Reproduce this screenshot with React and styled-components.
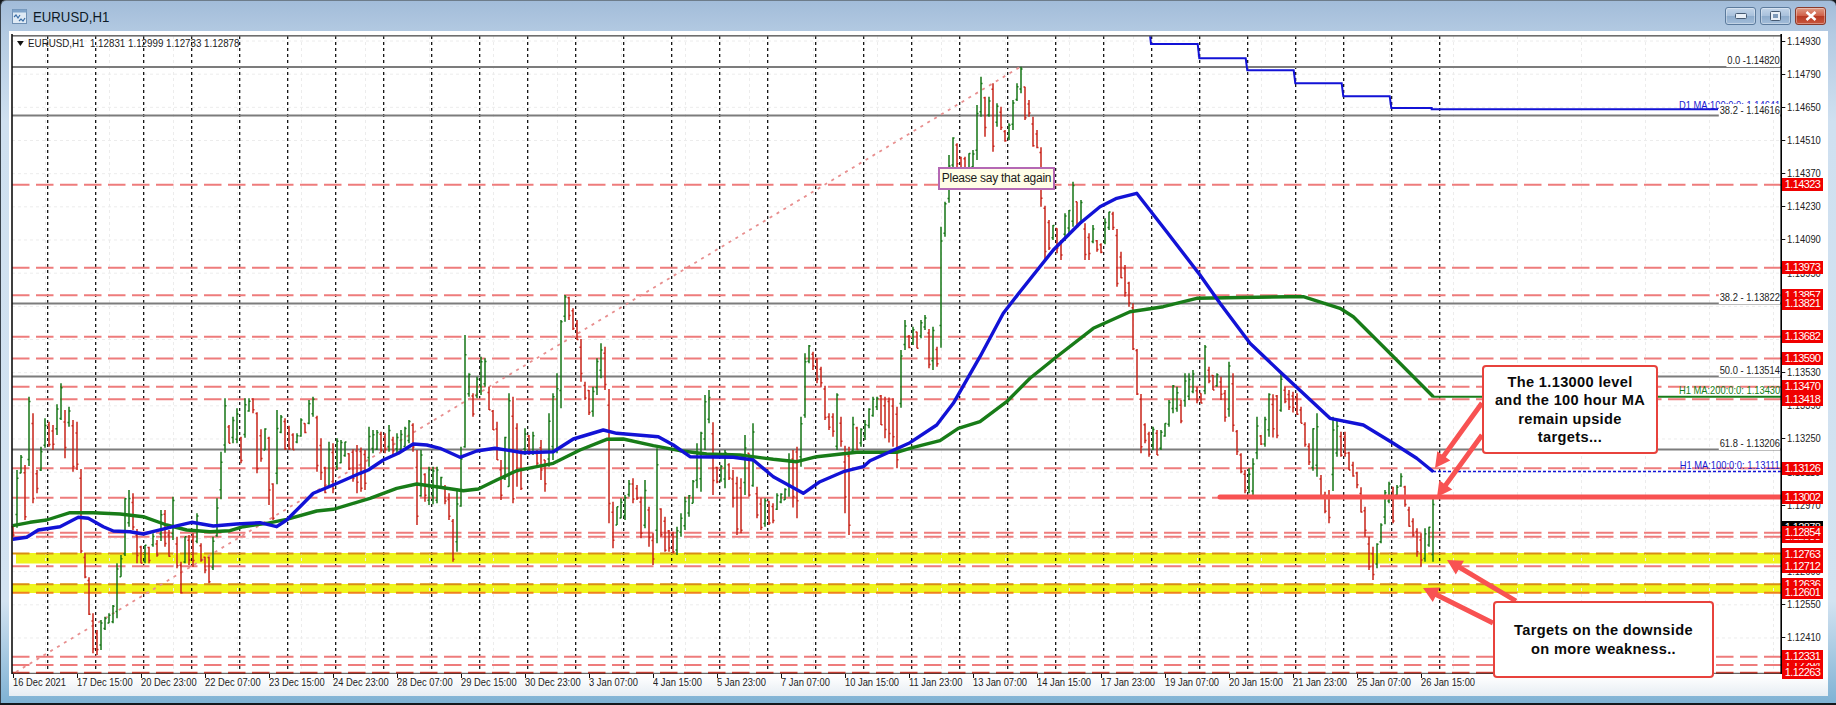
import React from 'react'
import styled, { createGlobalStyle, css } from 'styled-components'

const priceY = p => 41 + (1.1493 - p) * 23690

// traced from the chart: [x, top, bottom], in 3x crop coordinates
const fromCrop = (ox, oy, list) => list.map(([x, a, b]) => [ox + x / 3, oy + a / 3, oy + b / 3])
const pts = (ox, oy, list) => list.map(([x, y]) => [ox + x / 3, oy + y / 3])

const rawBars = [
  ...fromCrop(10, 330, [[13,590,620],[25,420,570],[35,375,430],[45,405,570],[55,200,340],[63,80,345],[70,250,520],[80,420,490],[90,350,380],[100,250,375],[110,265,340],[125,260,310],[133,285,360],[150,255,310],[157,160,270],[170,240,385],[180,230,290],[190,270,425],[200,275,420],[210,395,500],[215,460,670],[222,670,745],[232,700,820],[240,790,855],[248,850,970],[258,900,975],[268,870,960],[280,860,900],[295,850,880],[310,825,880],[322,700,865],[335,675,740],[347,505,640],[355,480,590],[365,490,600],[375,600,650],[385,650,700],[400,645,700],[415,650,700],[430,610,650],[445,630,680],[455,540,600],[462,490,620],[470,540,650],[480,600,680],[490,500,630],[500,620,715],[510,695,790],[520,695,760],[530,620,700],[545,610,710],[560,550,640],[570,640,695],[585,680,730],[597,680,760],[607,620,720],[617,505,620],[627,430,560],[637,365,490],[650,205,340],[660,285,340],[675,235,340],[690,320,400],[700,210,260],[710,205,240],[730,205,250],[745,300,430],[760,295,360],[775,320,525],[785,460,570],[795,310,465],[805,240,380],[815,255,310],[830,265,360],[845,310,360],[860,310,340],[870,265,320],[885,280,310],[897,210,255],[905,200,260],[915,280,425],[930,325,450],[945,410,490],[955,335,470],[970,340,490],[985,325,420],[1000,340,410],[1010,335,380],[1020,370,420],[1035,265,440],[1045,345,490],[1060,360,480],[1075,290,410],[1090,300,370],[1105,300,360],[1120,310,370],[1135,285,365],[1150,320,375],[1165,310,370],[1180,290,350],[1195,270,340],[1210,280,365],[1222,360,585],[1232,360,500],[1245,430,515],[1260,410,525],[1275,410,520]]),
  ...fromCrop(440, 280, [[5,590,625],[25,640,720],[40,740,845],[50,630,815],[60,620,715],[68,500,680],[75,165,400],[85,280,350],[95,340,410],[105,345,400],[115,290,355],[125,230,345],[135,235,320],[145,320,390],[155,390,450],[165,425,540],[178,535,660],[188,540,660],[198,470,600],[205,340,620],[215,350,670],[228,430,620],[240,510,630],[250,445,525],[265,465,525],[280,455,525],[290,510,560],[305,480,600],[320,540,635],[330,400,560],[345,400,575],[355,280,520],[365,120,385],[372,90,240],[380,45,125],[390,50,120],[405,70,215],[415,120,180],[428,240,305],[435,305,360],[445,330,405],[455,320,410],[465,315,410],[475,235,345],[485,190,295],[495,200,330],[502,290,660],[510,590,730],[520,665,805],[530,680,735],[540,655,715],[552,645,720],[565,600,650],[575,595,670],[590,615,660],[605,650,775],[615,600,745],[625,680,800],[635,760,855],[645,740,820],[655,505,790],[665,685,770],[675,710,815],[690,750,815],[700,755,820],[712,740,825],[720,700,770],[730,685,740],[740,650,750],[750,645,710],[762,600,670],[772,490,625],[785,455,635],[795,345,510],[805,330,430],[815,345,520],[822,510,645],[835,560,610],[848,555,605],[860,510,625],[870,550,600],[885,590,680],[895,590,765],[905,595,760],[912,465,645],[922,520,650],[935,430,620],[945,620,715],[960,655,750],[970,680,755],[980,655,740],[995,670,730],[1010,640,690],[1025,640,670],[1040,625,660],[1052,520,650],[1065,620,690],[1075,500,715],[1082,410,560],[1090,250,410],[1100,220,270],[1110,195,250],[1120,215,270],[1130,235,310],[1145,260,320],[1150,290,370],[1160,375,420],[1170,400,450],[1180,400,470],[1190,340,510],[1200,410,500],[1212,460,590],[1220,520,700],[1225,500,765],[1240,410,520],[1252,440,510],[1265,445,500],[1280,420,480],[1295,350,410],[1305,350,390],[1318,350,435]]),
  ...fromCrop(870, 250, [[28,435,525],[40,380,540],[50,440,565],[65,445,590],[77,470,655],[88,260,460],[97,300,380],[107,210,300],[120,255,295],[130,230,285],[142,245,295],[155,210,265],[167,195,240],[178,260,355],[190,230,360],[200,290,350],[210,280,330]]),
  ...fromCrop(900, 60, [[125,500,620],[135,425,530],[147,285,410],[160,232,330],[172,250,330],[183,290,330],[195,290,330],[205,280,330],[217,270,330],[228,300,330],[232,135,300],[240,50,170],[250,55,190],[258,110,230],[265,110,170],[274,25,150],[280,70,275],[292,130,200],[303,140,210],[313,210,245],[325,190,240],[333,185,240],[342,120,210],[352,70,105],[363,20,100],[370,35,120],[378,80,180],[388,120,170],[397,170,260],[407,210,265],[417,250,320],[425,305,440],[433,390,580],[440,510,600],[450,480,570],[462,495,540],[470,505,580],[480,540,600],[490,480,570],[500,460,530],[510,450,520],[522,365,500],[532,425,500],[542,420,490],[552,490,600],[562,500,600],[570,520,600],[580,495,550],[592,540,575],[602,550,580],[612,535,580]]),
  ...fromCrop(1100, 160, [[20,175,250],[30,155,210],[38,155,210],[45,290,415],[52,320,380],[60,275,355],[70,265,380],[78,315,410],[90,365,440],[100,430,570],[107,540,620],[113,620,705],[118,705,830],[128,765,880],[138,790,850],[143,790,915],[152,815,890],[163,800,870],[172,810,885],[183,810,870],[192,790,830],[203,765,825],[212,720,800],[222,675,760],[232,680,755],[240,720,790],[250,640,740],[262,615,690],[272,640,720],[283,630,700],[293,680,730],[303,700,730],[315,555,660],[325,620,670],[340,645,690],[350,640,680],[358,530,650],[368,650,720],[378,690,785],[388,605,770],[400,640,815],[415,810,885],[425,880,940],[435,930,1000],[445,925,1000],[458,895,1005],[468,770,880],[480,825,855],[495,770,860],[507,700,830],[525,705,835],[537,590,700],[548,640,755],[560,680,730],[572,690,750],[585,700,765],[600,740,790],[620,800,860],[632,850,915],[645,760,950],[660,820,950],[668,945,1010],[678,995,1060],[685,990,1090],[693,840,990],[703,770,850],[712,780,890],[722,815,890],[735,815,890],[750,875,930],[762,905,950],[775,935,985],[790,910,1020],[800,1040,1130],[810,1130,1230],[820,1160,1260],[828,1155,1280],[835,1150,1225],[845,1090,1150],[855,990,1070],[865,965,1030],[875,980,1090],[885,975,1010],[898,940,980],[910,960,1000],[920,985,1040],[930,1040,1100],[940,1075,1130],[950,1105,1190],[960,1115,1195],[965,1120,1220],[970,1040,1130],[978,1105,1205],[988,1100,1160],[995,1055,1140],[1000,1010,1205]]),
]

const rand = i => {
  const s = Math.sin(i * 12.9898) * 43758.5453
  return s - Math.floor(s)
}

const buildBars = () => {
  const slots = new Map()
  rawBars.forEach(([x, top, bottom]) => slots.set(Math.round((x - 1) / 4), { top, bottom }))
  const keys = [...slots.keys()].sort((a, b) => a - b)
  const out = []
  keys.forEach((k, n) => {
    const cur = slots.get(k)
    out.push({ slot: k, ...cur })
    const next = keys[n + 1]
    if (next === undefined) return
    const nb = slots.get(next)
    for (let s = k + 1; s < next; s++) {
      const t = (s - k) / (next - k)
      out.push({ slot: s, top: cur.top + (nb.top - cur.top) * t, bottom: cur.bottom + (nb.bottom - cur.bottom) * t })
    }
  })
  // price bars always touch their neighbour, close the gaps left by tracing
  out.forEach((b, i) => {
    if (!i) return
    const prev = out[i - 1]
    if (b.top > prev.bottom) b.top = prev.bottom - 1
    if (b.bottom < prev.top) b.bottom = prev.top + 1
  })
  return out
}

const bars = buildBars()
let upPath = ''
let downPath = ''
bars.forEach((b, i) => {
  const x = b.slot * 4 + 1
  const mid = (b.top + b.bottom) / 2
  const prev = i ? (bars[i - 1].top + bars[i - 1].bottom) / 2 : mid
  const up = mid < prev
  const h = b.bottom - b.top
  const open = up ? b.bottom - h * 0.25 * rand(i) : b.top + h * 0.25 * rand(i)
  const close = up ? b.top + h * 0.25 * rand(i + 500) : b.bottom - h * 0.25 * rand(i + 500)
  const d = `M${x} ${b.top.toFixed(1)}V${b.bottom.toFixed(1)}M${x - 1.5} ${open.toFixed(1)}H${x}M${x} ${close.toFixed(1)}H${x + 1.5}`
  if (up) upPath += d
  else downPath += d
})

const blueLine = [
  ...pts(10, 330, [[8,628],[50,622],[85,600],[150,590],[205,562],[235,565],[280,590],[310,603],[360,605],[400,612],[440,602],[490,590],[545,577],[610,588],[680,582],[750,578],[800,590],[830,570],[870,530],[910,490],[975,463],[1050,430],[1075,420],[1120,390],[1165,370],[1210,342],[1250,345]]),
  ...pts(440, 280, [[0,505],[60,532],[110,513],[165,505],[250,518],[340,515],[400,477],[490,450],[530,460],[655,470],[700,495],[750,530],[880,532],[940,540],[1000,590],[1090,640],[1140,605],[1210,575],[1270,560]]),
  ...pts(870, 250, [[0,632],[120,578],[200,525],[250,460],[330,320],[400,190],[450,125],[550,0]]),
  ...pts(900, 60, [[540,490],[600,440],[650,415]]),
  ...pts(1100, 160, [[110,100],[200,215],[300,345],[360,430],[450,550],[540,635],[690,775],[790,795],[880,850],[950,895],[1000,935]]),
]

const greenLine = [
  ...pts(10, 330, [[8,587],[60,577],[110,570],[180,548],[250,548],[330,552],[400,560],[470,585],[530,600],[600,605],[660,602],[700,590],[770,580],[830,568],[920,543],[970,538],[1080,505],[1160,475],[1220,462]]),
  ...pts(440, 280, [[0,622],[70,632],[115,627],[170,600],[230,572],[340,550],[420,510],[500,478],[550,477],[640,497],[720,512],[800,522],[900,525],[1000,538],[1070,545],[1130,530],[1250,517]]),
  ...pts(870, 250, [[80,607],[130,592],[210,572],[265,535],[330,515],[410,455],[480,385],[560,320],[670,235],[780,185],[880,170],[980,145]]),
  ...pts(1100, 160, [[570,410],[610,410],[720,445],[760,470],[890,600],[1000,710]]),
]

const stepLine = pts(1130, 20, [[60,45],[63,72],[203,72],[208,115],[347,115],[352,151],[491,151],[496,190],[635,190],[640,229],[779,229],[784,264],[905,264],[905,268],[1764,268]])

const toPoints = list => list.map(([x, y]) => `${x.toFixed(1)},${y.toFixed(1)}`).join(' ')

const levels = [
  { y: priceY(1.14323) },
  { y: priceY(1.13973) },
  { y: priceY(1.13857) },
  { y: priceY(1.13682) },
  { y: priceY(1.1359) },
  { y: priceY(1.1347) },
  { y: priceY(1.13418) },
  { y: priceY(1.13126) },
  { y: priceY(1.13002) },
  { y: 532.7 },
  { y: 536.7 },
  { y: 553.5, color: '#d98f12' },
  { y: 566.2 },
  { y: 584.2, color: '#d98f12' },
  { y: 592.8, color: '#f0821e' },
  { y: 656.8 },
  { y: 665 },
  { y: 672.8, color: '#e84a3c' },
]

const fibLevels = [1.1482, 1.14616, 1.13822, 1.13514, 1.13206]

const axisTicks = Array.from({ length: 19 }, (_, i) => 1.1493 - i * 0.0014)

const priceTags = [
  [1.14323], [1.13973], [1.13857], [1.13821], [1.13682], [1.1359], [1.1347], [1.13418], [1.13126], [1.13002],
  [1.12878, '#000'], [1.12838], [1.12854], [1.12763], [1.12712], [1.12636], [1.12601], [1.12294], [1.12331], [1.12263],
]

const timeLabels = ['16 Dec 2021', '17 Dec 15:00', '20 Dec 23:00', '22 Dec 07:00', '23 Dec 15:00', '24 Dec 23:00', '28 Dec 07:00', '29 Dec 15:00', '30 Dec 23:00', '3 Jan 07:00', '4 Jan 15:00', '5 Jan 23:00', '7 Jan 07:00', '10 Jan 15:00', '11 Jan 23:00', '13 Jan 07:00', '14 Jan 15:00', '17 Jan 23:00', '19 Jan 07:00', '20 Jan 15:00', '21 Jan 23:00', '25 Jan 07:00', '26 Jan 15:00']

const arrows = [
  [1482, 403, 1435, 468],
  [1482, 435, 1437, 497],
  [1516, 601, 1447, 560],
  [1493, 623, 1423, 588],
]

const arrowPolygon = ([x1, y1, x2, y2]) => {
  const len = Math.hypot(x2 - x1, y2 - y1)
  const ux = (x2 - x1) / len
  const uy = (y2 - y1) / len
  const nx = -uy
  const ny = ux
  const bx = x2 - ux * 15
  const by = y2 - uy * 15
  const p = (x, y) => `${x.toFixed(1)},${y.toFixed(1)}`
  return [
    p(x1 + nx * 2.5, y1 + ny * 2.5),
    p(bx + nx * 2.5, by + ny * 2.5),
    p(bx + nx * 8, by + ny * 8),
    p(x2, y2),
    p(bx - nx * 8, by - ny * 8),
    p(bx - nx * 2.5, by - ny * 2.5),
    p(x1 - nx * 2.5, y1 - ny * 2.5),
  ].join(' ')
}

const Global = createGlobalStyle`
  html, body { margin: 0; padding: 0; background: #14181c; overflow: hidden; }
  #root { width: 1836px; height: 705px; }
`

const Window = styled.div`
  box-sizing: border-box;
  width: 1836px;
  height: 703px;
  display: flex;
  flex-direction: column;
  padding: 0 8px 7px 8px;
  border-radius: 6px 6px 0 0;
  border-left: 1px solid #39424c;
  border-top: 1px solid #6d7c8a;
  background: linear-gradient(180deg, #a2bcd9 0, #b3cae2 32px, #cfe0f0 120px, #d3e3f1 600px, #7fb2d4 100%);
  font-family: "Liberation Sans", Arial, sans-serif;
`

const TitleBar = styled.div`
  height: 30px;
  flex: none;
  display: flex;
  align-items: center;
  gap: 6px;
  padding-left: 3px;
  padding-right: 2px;
`

const Title = styled.div`
  flex: 1;
  font-size: 15px;
  color: #0d1a26;
  transform: scaleX(0.88);
  transform-origin: left center;
`

const WinButtons = styled.div`
  display: flex;
  gap: 4px;
`

const WinButton = styled.div`
  width: 31px;
  height: 18px;
  box-sizing: border-box;
  border: 1px solid ${p => (p.$close ? '#8a3a2a' : '#5b7a9c')};
  border-radius: 3px;
  display: flex;
  align-items: center;
  justify-content: center;
  box-shadow: inset 0 0 0 1px rgba(255, 255, 255, 0.35);
  background: ${p => (p.$close
    ? 'linear-gradient(180deg, #df9b85 0, #d0624a 48%, #b83a24 52%, #c8563c 100%)'
    : 'linear-gradient(180deg, #c3d5e9 0, #a9c1dc 48%, #8eaccc 52%, #a3bdd9 100%)')};
`

const Sheet = styled.div`
  flex: 1;
  display: flex;
  flex-direction: column;
  background: linear-gradient(180deg, #fff 0, #fff 97%, #e6edf3 100%);
  padding: 3px 0 0 2px;
  min-height: 0;
`

const ChartRow = styled.div`
  display: flex;
  height: 640px;
  flex: none;
`

const Plot = styled.div`
  position: relative;
  width: 1771px;
  height: 640px;
  flex: none;
`

const ChartSvg = styled.svg`
  display: block;
  width: 1771px;
  height: 640px;
`

const squeezed = css`
  font-size: 11px;
  white-space: nowrap;
  transform: scaleX(0.85);
`

const Legend = styled.div`
  position: absolute;
  left: 6px;
  top: 2px;
  display: flex;
  align-items: center;
  gap: 5px;
  height: 14px;
  color: #1c1c1c;
  ${squeezed}
  font-size: 11.5px;
  transform-origin: left center;
`

const Caret = styled.span`
  width: 0;
  height: 0;
  border-left: 4px solid transparent;
  border-right: 4px solid transparent;
  border-top: 5px solid #111;
`

const ChartNote = styled.div`
  position: absolute;
  right: 2px;
  height: 13px;
  line-height: 13px;
  padding-left: 1px;
  color: ${p => p.$color};
  background: ${p => (p.$solid ? '#fff' : 'transparent')};
  ${squeezed}
  transform-origin: right center;
`

const Tooltip = styled.div`
  position: absolute;
  left: 927px;
  top: 133px;
  box-sizing: border-box;
  width: 117px;
  height: 23px;
  border: 2px solid #b468b4;
  background: #fffde6;
  color: #1a1a1a;
  font-size: 12px;
  letter-spacing: -0.25px;
  line-height: 19px;
  text-align: center;
  white-space: nowrap;
  overflow: hidden;
`

const Callout = styled.div`
  position: absolute;
  left: ${p => p.$left}px;
  top: ${p => p.$top}px;
  width: ${p => p.$width}px;
  height: ${p => p.$height}px;
  box-sizing: border-box;
  border: 2px solid #e8423c;
  border-radius: 4px;
  background: #fff;
  display: flex;
  flex-direction: column;
  align-items: center;
  justify-content: center;
  color: #0a0a0a;
  font-weight: 700;
  font-size: 14.6px;
  line-height: 18.2px;
  letter-spacing: 0.35px;
`

const PriceAxis = styled.div`
  position: relative;
  flex: 1;
`

const AxisTick = styled.div`
  position: absolute;
  left: 5px;
  height: 13px;
  line-height: 13px;
  color: #222;
  ${squeezed}
  transform-origin: left center;
  &::before {
    content: '';
    position: absolute;
    left: -6px;
    top: 6px;
    width: 4px;
    height: 1px;
    background: #111;
  }
`

const PriceTag = styled.div`
  position: absolute;
  left: 0;
  width: 41px;
  height: 13px;
  background: ${p => p.$bg};
  color: #fff;
  font-size: 11px;
  line-height: 13px;
  text-align: center;
  letter-spacing: -0.6px;
`

const TimeAxis = styled.div`
  display: flex;
  padding-left: 2px;
  height: 18px;
  flex: none;
`

const TimeCell = styled.div`
  position: relative;
  width: 64px;
  flex: none;
  padding-top: 2px;
  &::before {
    content: '';
    position: absolute;
    left: 0;
    top: 0;
    width: 1px;
    height: 4px;
    background: #111;
  }
`

const TimeText = styled.div`
  height: 13px;
  line-height: 13px;
  color: #222;
  ${squeezed}
  transform-origin: left center;
`

const WindowIcon = () => (
  <svg width="15" height="15" viewBox="0 0 15 15">
    <rect x="0.5" y="0.5" width="14" height="14" fill="#dfeaf5" stroke="#6f8fb2" />
    <rect x="0.5" y="0.5" width="14" height="3" fill="#7fa3c9" />
    <path d="M2 8l2-2 2 3 2-3M7 12l2-2 2 2 2-3" fill="none" stroke="#3c6fa6" strokeWidth="1.2" />
  </svg>
)

const MinGlyph = () => (
  <svg width="12" height="6" viewBox="0 0 12 6">
    <rect x="0.5" y="0.5" width="11" height="5" rx="1" fill="#e8eff7" stroke="#465a72" />
  </svg>
)

const RestoreGlyph = () => (
  <svg width="11" height="10" viewBox="0 0 11 10">
    <rect x="0.5" y="0.5" width="10" height="9" rx="1" fill="#e8eff7" stroke="#465a72" />
    <rect x="3" y="3" width="5" height="4" fill="#7f9bbb" />
  </svg>
)

const CloseGlyph = () => (
  <svg width="12" height="10" viewBox="0 0 12 10">
    <path d="M1.5 1L10.5 9M10.5 1L1.5 9" stroke="#fff" strokeWidth="2.6" />
  </svg>
)

const PriceChart = () => {
  const verticals = Array.from({ length: 30 }, (_, i) => 47.7 + 48 * i)
  const faintV = Array.from({ length: 28 }, (_, i) => 45.5 + 64 * i)
  return (
    <ChartSvg viewBox="11 34 1771 640">
      <rect x="16" y="553" width="1765" height="10.5" fill="#eef51c" />
      <rect x="12" y="584" width="1769" height="9" fill="#eef51c" />
      {axisTicks.map(p => (
        <line key={p} x1="12" x2="1781" y1={priceY(p)} y2={priceY(p)} stroke="#ececec" strokeDasharray="3 3" />
      ))}
      {faintV.map(x => (
        <line key={x} x1={x} x2={x} y1="36" y2="673" stroke="#ececec" strokeDasharray="3 3" />
      ))}
      {verticals.map(x => (
        <line key={x} x1={x} x2={x} y1="36" y2="673" stroke="#000" strokeWidth="1.2" strokeDasharray="3 3" />
      ))}
      {fibLevels.map(p => (
        <line key={p} x1="12" x2="1781" y1={priceY(p)} y2={priceY(p)} stroke="#7c7c7c" strokeWidth="2" />
      ))}
      {levels.map(l => (
        <line key={l.y} x1="12" x2="1781" y1={l.y} y2={l.y} stroke={l.color || '#ee7c7c'} strokeWidth="2" strokeDasharray="17.5 6.5" />
      ))}
      <line x1="16" y1="672" x2="1020" y2="67" stroke="#e88f8f" strokeWidth="1.8" strokeDasharray="3 5" />
      <path d={downPath} fill="none" stroke="#c8241a" strokeWidth="1.5" />
      <path d={upPath} fill="none" stroke="#167616" strokeWidth="1.5" />
      <polyline points={toPoints(greenLine)} fill="none" stroke="#187c18" strokeWidth="3.4" strokeLinejoin="round" />
      <polyline points={toPoints(blueLine)} fill="none" stroke="#1212d6" strokeWidth="3.4" strokeLinejoin="round" />
      <polyline points={toPoints(stepLine)} fill="none" stroke="#1212d6" strokeWidth="2" />
      <line x1="1433" y1="396.7" x2="1781" y2="396.7" stroke="#187c18" strokeWidth="2" />
      <line x1="1433" y1="471.5" x2="1781" y2="471.5" stroke="#1212d6" strokeWidth="1.5" strokeDasharray="3 2" />
      <line x1="1220" y1="497" x2="1781" y2="497" stroke="#f85252" strokeWidth="5" strokeLinecap="round" />
      {arrows.map(a => (
        <polygon key={a.join()} points={arrowPolygon(a)} fill="#f85252" />
      ))}
      <rect x="12" y="35" width="1769" height="1.6" fill="#6e6e6e" />
      <rect x="11.2" y="34" width="1.6" height="640" fill="#111" />
      <rect x="1780.4" y="34" width="1.8" height="640" fill="#000" />
      <rect x="12" y="672.8" width="1769" height="1" fill="#111" opacity="0.8" />
    </ChartSvg>
  )
}

export default function App() {
  const top = y => y - 34
  return (
    <>
      <Global />
      <Window>
        <TitleBar>
          <WindowIcon />
          <Title>EURUSD,H1</Title>
          <WinButtons>
            <WinButton><MinGlyph /></WinButton>
            <WinButton><RestoreGlyph /></WinButton>
            <WinButton $close><CloseGlyph /></WinButton>
          </WinButtons>
        </TitleBar>
        <Sheet>
          <ChartRow>
            <Plot>
              <PriceChart />
              <Legend>
                <Caret />
                EURUSD,H1&nbsp; 1.12831 1.12999 1.12733 1.12878
              </Legend>
              <ChartNote $color="#1a1ad0" style={{ top: top(99) }}>D1 MA:100:0:0: 1.14641</ChartNote>
              <ChartNote $color="#1a1ad0" style={{ top: top(459) }}>H1 MA:100:0:0: 1.13111</ChartNote>
              <ChartNote $color="#187c18" style={{ top: top(384) }}>H1 MA:200:0:0: 1.13430</ChartNote>
              <ChartNote $color="#222" $solid style={{ top: top(54) }}>0.0 -1.14820</ChartNote>
              <ChartNote $color="#222" $solid style={{ top: top(104) }}>38.2 - 1.14616</ChartNote>
              <ChartNote $color="#222" $solid style={{ top: top(291) }}>38.2 - 1.13822</ChartNote>
              <ChartNote $color="#222" $solid style={{ top: top(364) }}>50.0 - 1.13514</ChartNote>
              <ChartNote $color="#222" $solid style={{ top: top(437) }}>61.8 - 1.13206</ChartNote>
              <Tooltip>Please say that again</Tooltip>
              <Callout $left={1471} $top={331} $width={176} $height={89}>
                <div>The 1.13000 level</div>
                <div>and the 100 hour MA</div>
                <div>remain upside</div>
                <div>targets...</div>
              </Callout>
              <Callout $left={1482} $top={567} $width={221} $height={77}>
                <div>Targets on the downside</div>
                <div>on more weakness..</div>
              </Callout>
            </Plot>
            <PriceAxis>
              {axisTicks.map(p => (
                <AxisTick key={p} style={{ top: top(priceY(p)) - 6.5 }}>{p.toFixed(5)}</AxisTick>
              ))}
              {priceTags.map(([p, bg]) => (
                <PriceTag key={p} $bg={bg || '#f00000'} style={{ top: top(priceY(p)) - 6.5 }}>{p.toFixed(5)}</PriceTag>
              ))}
            </PriceAxis>
          </ChartRow>
          <TimeAxis>
            {timeLabels.map(t => (
              <TimeCell key={t}><TimeText>{t}</TimeText></TimeCell>
            ))}
          </TimeAxis>
        </Sheet>
      </Window>
    </>
  )
}
